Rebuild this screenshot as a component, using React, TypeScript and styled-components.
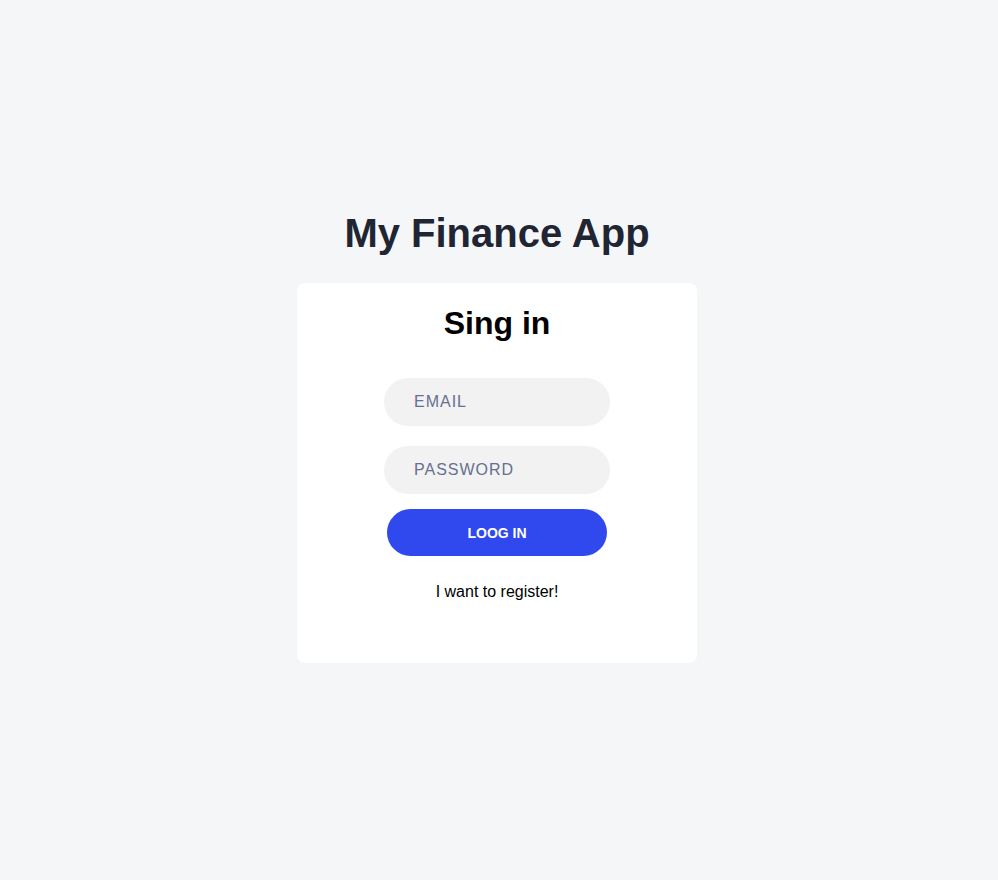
import React from "react";
import styled, { createGlobalStyle } from "styled-components";

const GlobalStyle = createGlobalStyle`
  html, body { margin: 0; padding: 0; }
  body {
    background: #f5f6f8;
    font-family: "Liberation Sans", Arial, sans-serif;
  }
  * { box-sizing: border-box; }
`;

const Page = styled.main`
  min-height: 880px;
  display: flex;
  flex-direction: column;
  align-items: center;
  justify-content: center;
  padding: 0 4px 8px 0;
`;

const AppTitle = styled.h1`
  margin: 0 0 26px;
  font-size: 40px;
  line-height: 48px;
  font-weight: 700;
  color: #1f2533;
`;

const Card = styled.section`
  width: 400px;
  height: 380px;
  background: #ffffff;
  border-radius: 8px;
  display: flex;
  flex-direction: column;
  align-items: center;
  padding-top: 22px;
`;

const CardTitle = styled.h2`
  margin: 0 0 37px;
  font-size: 32px;
  line-height: 36px;
  font-weight: 700;
  color: #000000;
`;

const Form = styled.form`
  display: flex;
  flex-direction: column;
  align-items: center;
`;

const Input = styled.input`
  width: 226px;
  height: 48px;
  border: none;
  outline: none;
  border-radius: 24px;
  background: #f2f2f2;
  padding: 0 30px;
  font-family: "Liberation Sans", Arial, sans-serif;
  font-size: 16px;
  letter-spacing: 1px;
  color: #1f2533;
  margin-bottom: 20px;
  &::placeholder {
    color: #66708f;
    opacity: 1;
  }
  &:nth-of-type(2) {
    margin-bottom: 15px;
  }
`;

const Button = styled.button`
  width: 220px;
  height: 47px;
  border: none;
  border-radius: 24px;
  background: #3049ee;
  color: #ffffff;
  font-family: "Liberation Sans", Arial, sans-serif;
  font-size: 14px;
  font-weight: 700;
  cursor: pointer;
`;

const RegisterLink = styled.a`
  margin-top: 27px;
  font-size: 16px;
  line-height: 18px;
  color: #000000;
  text-decoration: none;
  cursor: pointer;
`;

export default function App() {
  return (
    <>
      <GlobalStyle />
      <Page>
        <AppTitle>My Finance App</AppTitle>
        <Card>
          <CardTitle>Sing in</CardTitle>
          <Form onSubmit={(e) => e.preventDefault()}>
            <Input type="email" placeholder="EMAIL" />
            <Input type="password" placeholder="PASSWORD" />
            <Button type="submit">LOOG IN</Button>
          </Form>
          <RegisterLink>I want to register!</RegisterLink>
        </Card>
      </Page>
    </>
  );
}
